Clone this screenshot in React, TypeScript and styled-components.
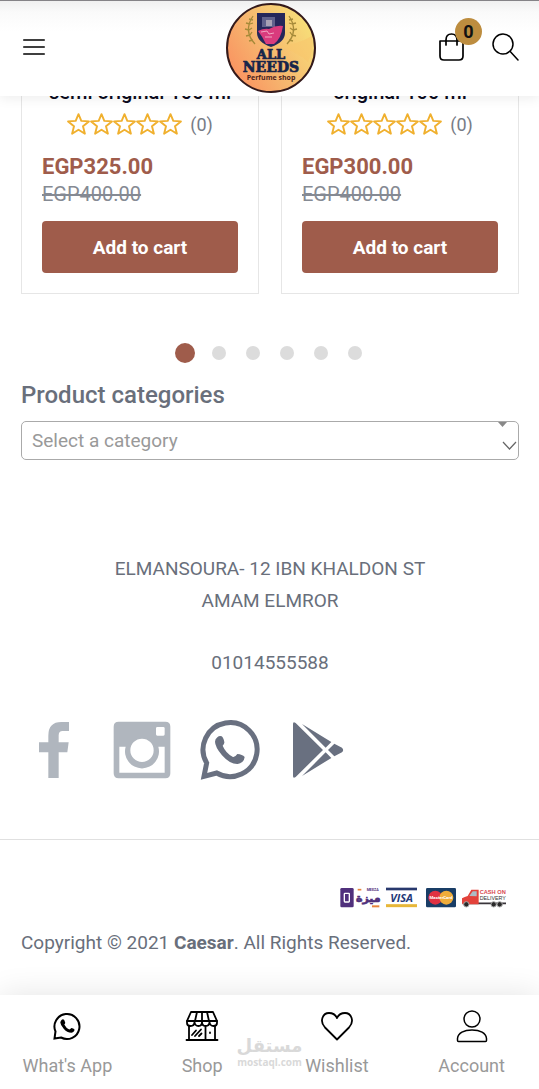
import React from "react";
import styled, { createGlobalStyle } from "styled-components";

const GlobalStyle = createGlobalStyle`
  *, *::before, *::after { box-sizing: border-box; }
  body { margin: 0; background: #fff; font-family: Roboto, "Liberation Sans", sans-serif; color: #696f7b; font-size: 19px; }
  button { font: inherit; border: 0; padding: 0; background: none; cursor: pointer; }
  a { color: inherit; text-decoration: none; }
  svg { display: block; }
  h1, h2, h3, p, ul { margin: 0; padding: 0; }
`;

const Page = styled.div`
  display: flex;
  flex-direction: column;
  min-height: 100vh;
`;

const Header = styled.header`
  position: sticky;
  top: 0;
  z-index: 2;
  display: grid;
  grid-template-columns: 1fr auto 1fr;
  align-items: center;
  height: 96px;
  padding: 0 20px 0 23px;
  background: linear-gradient(#858387 1px, #f0f0f0 1px, #fafafa 12px, #fff 32px);
  box-shadow: 0 2px 12px rgba(0, 0, 0, 0.08);
`;

const IconButton = styled.button`
  display: block;
  color: #000;
`;

const HeaderSide = styled.div`
  display: flex;
  align-items: center;
  gap: 28px;
  padding-bottom: 3px;
`;

const HeaderActions = styled(HeaderSide)`
  justify-content: flex-end;
`;

const CartButton = styled(IconButton)`
  position: relative;
`;

const Badge = styled.span`
  position: absolute;
  top: -15px;
  left: 16px;
  width: 27px;
  height: 27px;
  border-radius: 50%;
  background: #bd8d3f;
  color: #111;
  font-size: 18px;
  font-weight: 700;
  line-height: 27px;
  text-align: center;
`;

const Main = styled.main`
  margin-top: -20px;
  padding: 0 20px 0 21px;
`;

const Products = styled.div`
  display: grid;
  grid-template-columns: 1fr 1fr;
  gap: 22px;
`;

const Card = styled.article`
  display: flex;
  flex-direction: column;
  padding: 0 20px 20px;
  border: 1px solid #e6e6e6;
  border-top: 0;
`;

const CardTitle = styled.h3`
  color: #0c0c20;
  font-size: 20px;
  font-weight: 500;
  line-height: 32px;
  text-align: center;
  white-space: nowrap;
`;

const Rating = styled.div`
  display: flex;
  justify-content: center;
  align-items: center;
  gap: 8px;
  height: 32px;
  font-size: 18px;
  color: #777c86;
`;

const Price = styled.p`
  margin-top: 13px;
  color: #9f5c4b;
  font-size: 22px;
  font-weight: 700;
  line-height: 27px;
`;

const OldPrice = styled.del`
  color: #858a93;
  font-size: 20px;
  line-height: 28px;
`;

const AddButton = styled.button`
  height: 52px;
  margin-top: 13px;
  border-radius: 4px;
  background: #9f5c4b;
  color: #fff;
  font-size: 19px;
  font-weight: 700;
`;

const Dots = styled.div`
  display: flex;
  justify-content: center;
  margin-top: 49px;
`;

const DotButton = styled.button<{ $active: boolean }>`
  display: grid;
  place-items: center;
  width: 34px;
  height: 20px;

  &::before {
    content: "";
    width: ${(p) => (p.$active ? 20 : 14)}px;
    height: ${(p) => (p.$active ? 20 : 14)}px;
    border-radius: 50%;
    background: ${(p) => (p.$active ? "#9f5c4b" : "#dcdcdc")};
  }
`;

const SectionLabel = styled.label`
  display: block;
  margin-top: 16px;
  font-size: 24px;
  font-weight: 500;
  line-height: 32px;
`;

const SelectWrap = styled.div`
  position: relative;
  margin-top: 10px;
`;

const Select = styled.select`
  display: block;
  appearance: none;
  width: 100%;
  height: 39px;
  padding: 0 10px;
  border: 1px solid #aaa;
  border-radius: 5px;
  background: #fff;
  color: #999;
  font: inherit;
`;

const SelectArrows = styled.svg`
  position: absolute;
  top: 0;
  right: 0;
  pointer-events: none;
`;

const Contact = styled.address`
  margin-top: 93px;
  font-style: normal;
  line-height: 32px;
  text-align: center;
`;

const Phone = styled.a`
  display: block;
  margin-top: 30px;
`;

const Socials = styled.nav`
  display: flex;
  gap: 28px;
  margin-top: 41px;
  padding: 0 3px;
`;

const SocialLink = styled.a<{ $muted?: boolean }>`
  color: ${(p) => (p.$muted ? "#b0b6be" : "#697080")};
`;

const Footer = styled.footer`
  margin-top: 59px;
  padding: 47px 20px 36px 21px;
  border-top: 1px solid #e0e0e0;
`;

const Payments = styled.div`
  display: flex;
  justify-content: flex-end;
  padding-right: 11px;
`;

const Copyright = styled.p`
  margin-top: 18px;
  line-height: 32px;
`;

const BottomNav = styled.nav`
  position: sticky;
  bottom: 0;
  z-index: 2;
  display: grid;
  grid-template-columns: repeat(4, 1fr);
  height: 94px;
  margin-top: auto;
  background: #fff;
  box-shadow: 0 0 32px rgba(0, 0, 0, 0.11);
`;

const NavLink = styled.a`
  display: flex;
  flex-direction: column;
  align-items: center;
  gap: 11px;
  padding-top: 14px;
  color: #999;
  font-size: 18px;
  line-height: 24px;

  svg { color: #000; }
`;

const Watermark = styled.div`
  position: absolute;
  top: 41px;
  left: 50%;
  display: flex;
  flex-direction: column;
  align-items: center;
  width: 68px;
  margin-left: -34px;
  color: #d9d9d9;
  font-family: "DejaVu Sans", sans-serif;
  font-weight: 700;
  pointer-events: none;
`;

const WatermarkName = styled.span`
  font-size: 18px;
  line-height: 20px;
`;

const WatermarkSite = styled.span`
  font-family: "Open Sans", sans-serif;
  font-size: 10px;
  line-height: 12px;
`;

const Logo = () => (
  <svg width="92" height="92" viewBox="0 0 92 92" role="img" aria-label="All Needs Perfume shop">
    <defs>
      <linearGradient id="logoFill" x1="0" y1="0.75" x2="0.9" y2="0.2">
        <stop offset="0" stopColor="#fa9160" />
        <stop offset="0.45" stopColor="#f6b56e" />
        <stop offset="1" stopColor="#f7dd78" />
      </linearGradient>
    </defs>
    <circle cx="46" cy="46" r="44" fill="url(#logoFill)" stroke="#33191a" strokeWidth="2" />
    <path d="M52 44 Q72 43 87 34 Q89 48 83 60 Q70 48 52 44" fill="#f8c66d" opacity="0.6" />
    <path d="M32 11 H60 V31 Q60 40 46 45 Q32 40 32 31Z" fill="#25275a" />
    <path d="M37 15 H50 V25 H37Z" fill="#60618c" />
    <path d="M41 18 H47 V24 H41Z" fill="#a8a2b5" />
    <path d="M33 29 Q39 26 44 27 Q51 23 58 24 Q56 37 49 42 H41 Q37 34 33 29Z" fill="#d93b7d" />
    <path d="M36 30 L42 29 L44 32 L49 31 M40 35 H47" fill="none" stroke="#f1a6c2" strokeWidth="1" />
    <g fill="none" stroke="#a58a39" strokeWidth="1.3">
      <path d="M28 14 Q18 29 30 42 M28 18 l-4 -1 M25 22 l-4 -1 M24 28 l-4 -1 M25 33 l-4 1 M28 38 l-4 1 M25 22 l3 -1 M24 28 l3 -2 M25 33 l2 -3" />
      <path d="M64 14 Q74 29 62 42 M64 18 l4 -1 M67 22 l4 -1 M68 28 l4 -1 M67 33 l4 1 M64 38 l4 1 M67 22 l-3 -1 M68 28 l-3 -2 M67 33 l-2 -3" />
    </g>
    <g fill="#17254a" textAnchor="middle" fontFamily="'DejaVu Serif', serif" fontWeight="700" stroke="#17254a" strokeWidth="0.7">
      <text x="46" y="57" fontSize="13">ALL</text>
      <text x="46" y="70" fontSize="14">NEEDS</text>
    </g>
    <text x="46" y="78" fontSize="7" fill="#4b2320" textAnchor="middle" fontFamily="'Open Sans', sans-serif" fontWeight="700">Perfume shop</text>
  </svg>
);

const MenuIcon = () => (
  <svg width="22" height="16" viewBox="0 0 22 16" stroke="currentColor" strokeWidth="1.5" strokeLinecap="round" aria-hidden="true">
    <path d="M.7 1 H21.3 M.7 8 H21.3 M.7 15 H21.3" />
  </svg>
);

const BagIcon = () => (
  <svg width="25" height="28" viewBox="0 0 25 28" fill="none" stroke="currentColor" strokeWidth="1.7" strokeLinejoin="round" strokeLinecap="round" aria-hidden="true">
    <path d="M1 8 H24 V23 Q24 27 20 27 H5 Q1 27 1 23Z M7 12 V7 Q7 1 12.5 1 Q18 1 18 7 V12" />
  </svg>
);

const SearchIcon = () => (
  <svg width="27" height="28" viewBox="0 0 27 28" fill="none" stroke="currentColor" strokeWidth="1.5" strokeLinecap="round" aria-hidden="true">
    <circle cx="11" cy="11" r="10" />
    <path d="M18 18.2 L26 27" />
  </svg>
);

const Stars = () => (
  <svg width="115" height="22" viewBox="0 0 115 22" fill="none" stroke="#f0b02e" strokeWidth="1.9" strokeLinejoin="round" role="img" aria-label="0 out of 5 stars">
    {[0, 1, 2, 3, 4].map((i) => (
      <path key={i} transform={`translate(${i * 23} 0)`} d="M11.5 1.2 L14.3 7.9 L21.9 8.4 L16 13.2 L17.9 20.7 L11.5 16.7 L5.1 20.7 L7 13.2 L1.1 8.4 L8.7 7.9Z" />
    ))}
  </svg>
);

const FacebookIcon = () => (
  <svg width="60" height="60" viewBox="0 0 180 180" fill="currentColor" aria-hidden="true">
    <path d="M73 174 V97 H45 V67 H73 V47 Q73 6 112 6 H135 V33 H116 Q104 33 104 46 V67 H134 L130 97 H104 V174Z" />
  </svg>
);

const InstagramIcon = () => (
  <svg width="60" height="60" viewBox="0 0 180 180" fill="currentColor" fillRule="evenodd" aria-hidden="true">
    <path d="M20 5 H160 Q175 5 175 20 V160 Q175 175 160 175 H20 Q5 175 5 160 V20 Q5 5 20 5Z M136 21 Q132 21 132 25 V43 Q132 47 136 47 H154 Q158 47 158 43 V25 Q158 21 154 21Z M22 80 V158 H158 V80 H139 A51 51 0 1 1 41 80Z M90 56 A35 35 0 1 0 90 126 A35 35 0 1 0 90 56Z" />
  </svg>
);

const WhatsAppIcon = () => (
  <svg width="60" height="60" viewBox="0 0 180 180" aria-hidden="true">
    <path fill="none" stroke="currentColor" strokeWidth="15" strokeLinejoin="miter" d="M20 129 A81 81 0 1 1 50 159 L12 169 Z" />
    <path fill="currentColor" d="M52 52 Q58 46 65 49 Q70 52 73 66 Q74 71 68 77 Q77 99 99 111 Q105 112 112 102 Q127 103 134 111 Q132 128 113 132 Q90 133 66 106 Q45 80 45 65 Q45 57 52 52Z" />
  </svg>
);

const PlayIcon = () => (
  <svg width="60" height="60" viewBox="0 0 180 180" fill="currentColor" aria-hidden="true">
    <path d="M15 12 Q15 3 23 9 L105 90 L23 171 Q15 177 15 168Z M42 12 L130 66 L113 83Z M42 168 L130 114 L113 97Z M139 71 L162 83 Q169 90 162 97 L139 109 L120 90Z" />
  </svg>
);

const ShopIcon = () => (
  <svg width="34" height="34" viewBox="0 0 34 34" fill="none" stroke="currentColor" strokeWidth="1.8" strokeLinejoin="round" strokeLinecap="round" aria-hidden="true">
    <path d="M6 3 H28 L32 12 H2Z M12 3 L10 12 M17 3 V12 M22 3 L24 12" />
    <path d="M2 12 V14 Q2 17 5.5 17 Q9.5 17 9.5 13 V12 V13 Q10 17 13.5 17 Q17 17 17 13 V12 V13 Q17 17 20.5 17 Q24.5 17 24.5 13 V12 V13 Q25 17 28.5 17 Q32 17 32 14 V12" />
    <path d="M4 17 V30 M30 17 V30 M1.5 31 H32.5 M20.5 18 V30 M7 26 L11 21.5 M10 27 L16 20.5 M14 27 L16.5 24.5 M25 23.5 V24" />
  </svg>
);

const HeartIcon = () => (
  <svg width="34" height="34" viewBox="0 0 34 34" fill="none" stroke="currentColor" strokeWidth="1.8" strokeLinejoin="round" aria-hidden="true">
    <path d="M17 30.5 L5 18.5 C-1 12 3 4 9 4 C13 4 15.5 6 17 9 C18.5 6 21 4 25 4 C31 4 35 12 29 18.5Z" />
  </svg>
);

const AccountIcon = () => (
  <svg width="34" height="34" viewBox="0 0 34 34" fill="none" stroke="currentColor" strokeWidth="1.5" strokeLinejoin="round" aria-hidden="true">
    <circle cx="17" cy="10" r="8" />
    <path d="M2.5 31.5 V29.5 C3 24 9 21 17 21 S31 24 31.5 29.5 V31.5 Q31.5 32.5 30.5 32.5 H3.5 Q2.5 32.5 2.5 31.5Z" />
  </svg>
);

const WhatsAppNavIcon = () => (
  <svg width="34" height="34" viewBox="0 0 34 34" aria-hidden="true">
    <path fill="none" stroke="currentColor" strokeWidth="2" strokeLinejoin="miter" d="M5.5 22.5 A12.5 12.5 0 1 1 11 28.5 L4.5 29.5Z" />
    <path fill="currentColor" d="M11.5 11 Q13 9.5 14.2 11 L15.2 13.5 Q15.4 14.5 14.3 15.5 Q16 19 19.3 20.5 Q20.3 20.3 21.3 19 Q23.5 19 24.5 20.5 Q24.5 23 21.5 23.8 Q17 23.8 13.5 19.5 Q10.5 16 10.3 13.5 Q10.5 12 11.5 11Z" />
  </svg>
);

const PaymentLogos = () => (
  <svg width="168" height="22" viewBox="0 0 504 66" role="img" aria-label="Meeza, Visa, Mastercard, cash on delivery">
    <rect x="1" y="3" width="40" height="58" rx="4" fill="#50307c" />
    <rect x="13" y="19" width="15" height="26" rx="2" fill="none" stroke="#fff" strokeWidth="4" />
    <text x="85" y="46" fontSize="33" fontWeight="700" fill="#50307c" stroke="#50307c" strokeWidth="2" textAnchor="middle" fontFamily="'DejaVu Sans', sans-serif">ميزة</text>
    <path d="M53 8 H64" stroke="#e7843d" strokeWidth="5" />
    <text x="98" y="12" fontSize="11" fontWeight="700" fill="#50307c" textAnchor="middle">MEEZA</text>
    <path d="M96 58 H118" stroke="#e7843d" strokeWidth="6" />
    <path d="M138 6 H231" stroke="#28386d" strokeWidth="8" />
    <path d="M138 56 H231" stroke="#e7b739" strokeWidth="9" />
    <text x="185" y="44" fontSize="33" fontWeight="700" fontStyle="italic" fill="#243a79" textAnchor="middle" fontFamily="'Open Sans', sans-serif">VISA</text>
    <rect x="258" y="3" width="90" height="58" rx="4" fill="#193d66" />
    <circle cx="286" cy="32" r="21" fill="#df3142" />
    <circle cx="319" cy="32" r="21" fill="#efac3a" />
    <text x="303" y="36" fontSize="13" fontWeight="700" fill="#fff" textAnchor="middle">MasterCard</text>
    <path d="M368 49 H498" stroke="#39343a" strokeWidth="5" />
    <path d="M366 49 V34 Q374 29 383 27 L394 8 H416 V52 H368Z" fill="#e3423b" />
    <path d="M388 27 L398 13 H410 V28Z" fill="#adbdc5" />
    <g fill="#292929" stroke="#aaa" strokeWidth="3">
      <circle cx="379" cy="52" r="8" /><circle cx="461" cy="52" r="8" /><circle cx="479" cy="52" r="8" />
    </g>
    <text x="419" y="20" fontSize="17" fontWeight="700" fill="#d84a52" fontFamily="'Liberation Sans', sans-serif">CASH ON</text>
    <text x="419" y="39" fontSize="16" fill="#333" fontFamily="'Liberation Sans', sans-serif">DELIVERY</text>
  </svg>
);

const products = [
  { title: "semi original 100 ml", price: "EGP325.00", old: "EGP400.00" },
  { title: "original 100 ml", price: "EGP300.00", old: "EGP400.00" },
];

const navItems = [
  { label: "What's App", icon: <WhatsAppNavIcon /> },
  { label: "Shop", icon: <ShopIcon /> },
  { label: "Wishlist", icon: <HeartIcon /> },
  { label: "Account", icon: <AccountIcon /> },
];

export default function App() {
  const [slide, setSlide] = React.useState(0);
  return (
    <Page>
      <GlobalStyle />
      <Header>
        <HeaderSide>
          <IconButton aria-label="Menu"><MenuIcon /></IconButton>
        </HeaderSide>
        <a href="#home"><Logo /></a>
        <HeaderActions>
          <CartButton aria-label="Cart"><BagIcon /><Badge>0</Badge></CartButton>
          <IconButton aria-label="Search"><SearchIcon /></IconButton>
        </HeaderActions>
      </Header>
      <Main>
        <Products>
          {products.map((p) => (
            <Card key={p.title}>
              <CardTitle>{p.title}</CardTitle>
              <Rating><Stars /><span>(0)</span></Rating>
              <Price>{p.price}</Price>
              <OldPrice>{p.old}</OldPrice>
              <AddButton>Add to cart</AddButton>
            </Card>
          ))}
        </Products>
        <Dots>
          {[0, 1, 2, 3, 4, 5].map((i) => (
            <DotButton key={i} $active={i === slide} aria-label={`Slide ${i + 1}`} onClick={() => setSlide(i)} />
          ))}
        </Dots>
        <SectionLabel htmlFor="category">Product categories</SectionLabel>
        <SelectWrap>
          <Select id="category" defaultValue="">
            <option value="">Select a category</option>
          </Select>
          <SelectArrows width="24" height="39" viewBox="0 0 24 39" aria-hidden="true">
            <path d="M3 1 H12 L7.5 6Z" fill="#888" />
            <path d="M8 21 L14.5 28 L21 21" fill="none" stroke="#666" strokeWidth="1.2" />
          </SelectArrows>
        </SelectWrap>
        <Contact>
          <p>ELMANSOURA- 12 IBN KHALDON ST<br />AMAM ELMROR</p>
          <Phone href="tel:01014555588">01014555588</Phone>
        </Contact>
        <Socials aria-label="Social links">
          <SocialLink $muted href="#facebook" aria-label="Facebook"><FacebookIcon /></SocialLink>
          <SocialLink $muted href="#instagram" aria-label="Instagram"><InstagramIcon /></SocialLink>
          <SocialLink href="#whatsapp" aria-label="WhatsApp"><WhatsAppIcon /></SocialLink>
          <SocialLink href="#play" aria-label="Google Play"><PlayIcon /></SocialLink>
        </Socials>
      </Main>
      <Footer>
        <Payments><PaymentLogos /></Payments>
        <Copyright>Copyright © 2021 <strong>Caesar</strong>. All Rights Reserved.</Copyright>
      </Footer>
      <BottomNav aria-label="Main">
        {navItems.map((n) => (
          <NavLink key={n.label} href="#nav">{n.icon}{n.label}</NavLink>
        ))}
        <Watermark>
          <WatermarkName lang="ar">مستقل</WatermarkName>
          <WatermarkSite>mostaql.com</WatermarkSite>
        </Watermark>
      </BottomNav>
    </Page>
  );
}
